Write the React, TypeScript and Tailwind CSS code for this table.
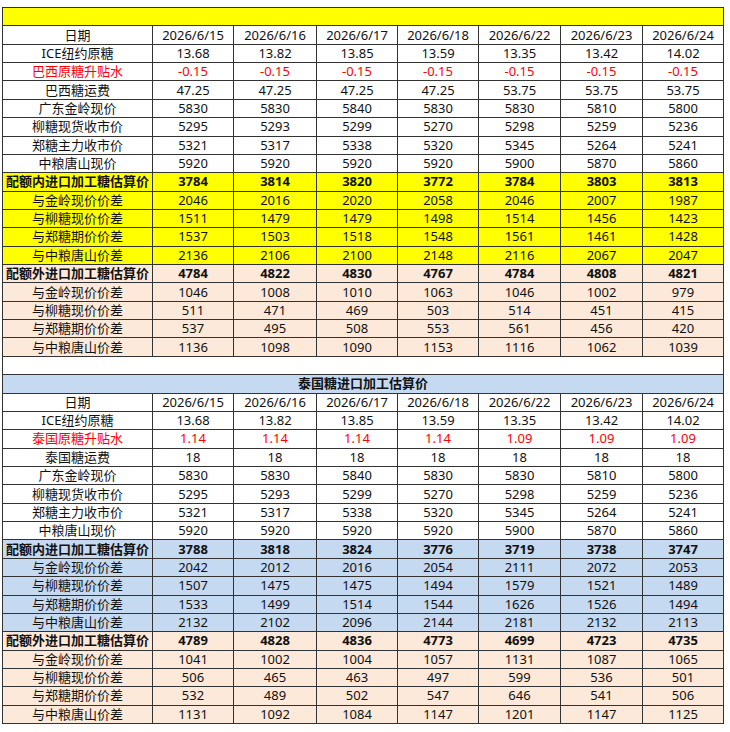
import React from "react";

type Row = {
  label: string;
  values: string[];
  kind: "white" | "red" | "boldY" | "yellow" | "boldP" | "peach" | "boldB" | "blue";
};

const dates = ["2026/6/15", "2026/6/16", "2026/6/17", "2026/6/18", "2026/6/22", "2026/6/23", "2026/6/24"];

const common = (s: string[][]): Row[] => [
  { label: "广东金岭现价", values: ["5830", "5830", "5840", "5830", "5830", "5810", "5800"], kind: "white" },
  { label: "柳糖现货收市价", values: ["5295", "5293", "5299", "5270", "5298", "5259", "5236"], kind: "white" },
  { label: "郑糖主力收市价", values: ["5321", "5317", "5338", "5320", "5345", "5264", "5241"], kind: "white" },
  { label: "中粮唐山现价", values: ["5920", "5920", "5920", "5920", "5900", "5870", "5860"], kind: "white" },
  ...s.map(() => null as unknown as Row).filter(Boolean),
];

const sec1: Row[] = [
  { label: "ICE纽约原糖", values: ["13.68", "13.82", "13.85", "13.59", "13.35", "13.42", "14.02"], kind: "white" },
  { label: "巴西原糖升贴水", values: Array(7).fill("-0.15"), kind: "red" },
  { label: "巴西糖运费", values: ["47.25", "47.25", "47.25", "47.25", "53.75", "53.75", "53.75"], kind: "white" },
  ...common([]),
  { label: "配额内进口加工糖估算价", values: ["3784", "3814", "3820", "3772", "3784", "3803", "3813"], kind: "boldY" },
  { label: "与金岭现价价差", values: ["2046", "2016", "2020", "2058", "2046", "2007", "1987"], kind: "yellow" },
  { label: "与柳糖现价价差", values: ["1511", "1479", "1479", "1498", "1514", "1456", "1423"], kind: "yellow" },
  { label: "与郑糖期价价差", values: ["1537", "1503", "1518", "1548", "1561", "1461", "1428"], kind: "yellow" },
  { label: "与中粮唐山价差", values: ["2136", "2106", "2100", "2148", "2116", "2067", "2047"], kind: "yellow" },
  { label: "配额外进口加工糖估算价", values: ["4784", "4822", "4830", "4767", "4784", "4808", "4821"], kind: "boldP" },
  { label: "与金岭现价价差", values: ["1046", "1008", "1010", "1063", "1046", "1002", "979"], kind: "peach" },
  { label: "与柳糖现价价差", values: ["511", "471", "469", "503", "514", "451", "415"], kind: "peach" },
  { label: "与郑糖期价价差", values: ["537", "495", "508", "553", "561", "456", "420"], kind: "peach" },
  { label: "与中粮唐山价差", values: ["1136", "1098", "1090", "1153", "1116", "1062", "1039"], kind: "peach" },
];

const sec2: Row[] = [
  { label: "ICE纽约原糖", values: ["13.68", "13.82", "13.85", "13.59", "13.35", "13.42", "14.02"], kind: "white" },
  { label: "泰国原糖升贴水", values: ["1.14", "1.14", "1.14", "1.14", "1.09", "1.09", "1.09"], kind: "red" },
  { label: "泰国糖运费", values: Array(7).fill("18"), kind: "white" },
  ...common([]),
  { label: "配额内进口加工糖估算价", values: ["3788", "3818", "3824", "3776", "3719", "3738", "3747"], kind: "boldB" },
  { label: "与金岭现价价差", values: ["2042", "2012", "2016", "2054", "2111", "2072", "2053"], kind: "blue" },
  { label: "与柳糖现价价差", values: ["1507", "1475", "1475", "1494", "1579", "1521", "1489"], kind: "blue" },
  { label: "与郑糖期价价差", values: ["1533", "1499", "1514", "1544", "1626", "1526", "1494"], kind: "blue" },
  { label: "与中粮唐山价差", values: ["2132", "2102", "2096", "2144", "2181", "2132", "2113"], kind: "blue" },
  { label: "配额外进口加工糖估算价", values: ["4789", "4828", "4836", "4773", "4699", "4723", "4735"], kind: "boldP" },
  { label: "与金岭现价价差", values: ["1041", "1002", "1004", "1057", "1131", "1087", "1065"], kind: "peach" },
  { label: "与柳糖现价价差", values: ["506", "465", "463", "497", "599", "536", "501"], kind: "peach" },
  { label: "与郑糖期价价差", values: ["532", "489", "502", "547", "646", "541", "506"], kind: "peach" },
  { label: "与中粮唐山价差", values: ["1131", "1092", "1084", "1147", "1201", "1147", "1125"], kind: "peach" },
];

const bgFor = (k: Row["kind"]) => {
  switch (k) {
    case "boldY":
    case "yellow":
      return "bg-[#ffff00]";
    case "boldP":
    case "peach":
      return "bg-[#fde9d9]";
    case "boldB":
    case "blue":
      return "bg-[#c5d9f1]";
    default:
      return "bg-white";
  }
};

const cell = "h-[18.36px] p-0 text-center align-middle whitespace-nowrap border border-[#333333] leading-[17px]";

function DataRows({ rows }: { rows: Row[] }) {
  return (
    <>
      {rows.map((r, i) => {
        const bold = r.kind === "boldY" || r.kind === "boldP" || r.kind === "boldB";
        const color = r.kind === "red" ? "text-[#ff0000]" : "text-[#111111]";
        return (
          <tr key={i} className={`${bgFor(r.kind)} ${color} ${bold ? "font-bold" : ""}`}>
            <td className={cell}>{r.label}</td>
            {r.values.map((v, j) => (
              <td key={j} className={cell}>
                {v}
              </td>
            ))}
          </tr>
        );
      })}
    </>
  );
}

function Header() {
  return (
    <tr className="bg-white text-[#111111]">
      <td className={cell}>日期</td>
      {dates.map((d) => (
        <td key={d} className={cell}>
          {d}
        </td>
      ))}
    </tr>
  );
}

export default function App() {
  return (
    <div className="w-[730px] h-[732px] bg-white pt-[7px] pl-[2px]">
      <table
        className="table-fixed border-collapse w-[721px] text-[13px]"
        style={{ fontFamily: '"Noto Sans", "Noto Sans CJK SC", sans-serif' }}
      >
        <colgroup>
          <col className="w-[150px]" />
          <col className="w-[81px]" />
          <col className="w-[83px]" />
          <col className="w-[81px]" />
          <col className="w-[81px]" />
          <col className="w-[82px]" />
          <col className="w-[82px]" />
          <col className="w-[81px]" />
        </colgroup>
        <tbody>
          <tr className="bg-[#ffff00]">
            <td colSpan={8} className={cell}></td>
          </tr>
          <Header />
          <DataRows rows={sec1} />
          <tr className="bg-white">
            <td colSpan={8} className={cell}></td>
          </tr>
          <tr className="bg-[#c5d9f1] font-bold text-[#111111]">
            <td colSpan={8} className={cell}>
              泰国糖进口加工估算价
            </td>
          </tr>
          <Header />
          <DataRows rows={sec2} />
        </tbody>
      </table>
    </div>
  );
}
